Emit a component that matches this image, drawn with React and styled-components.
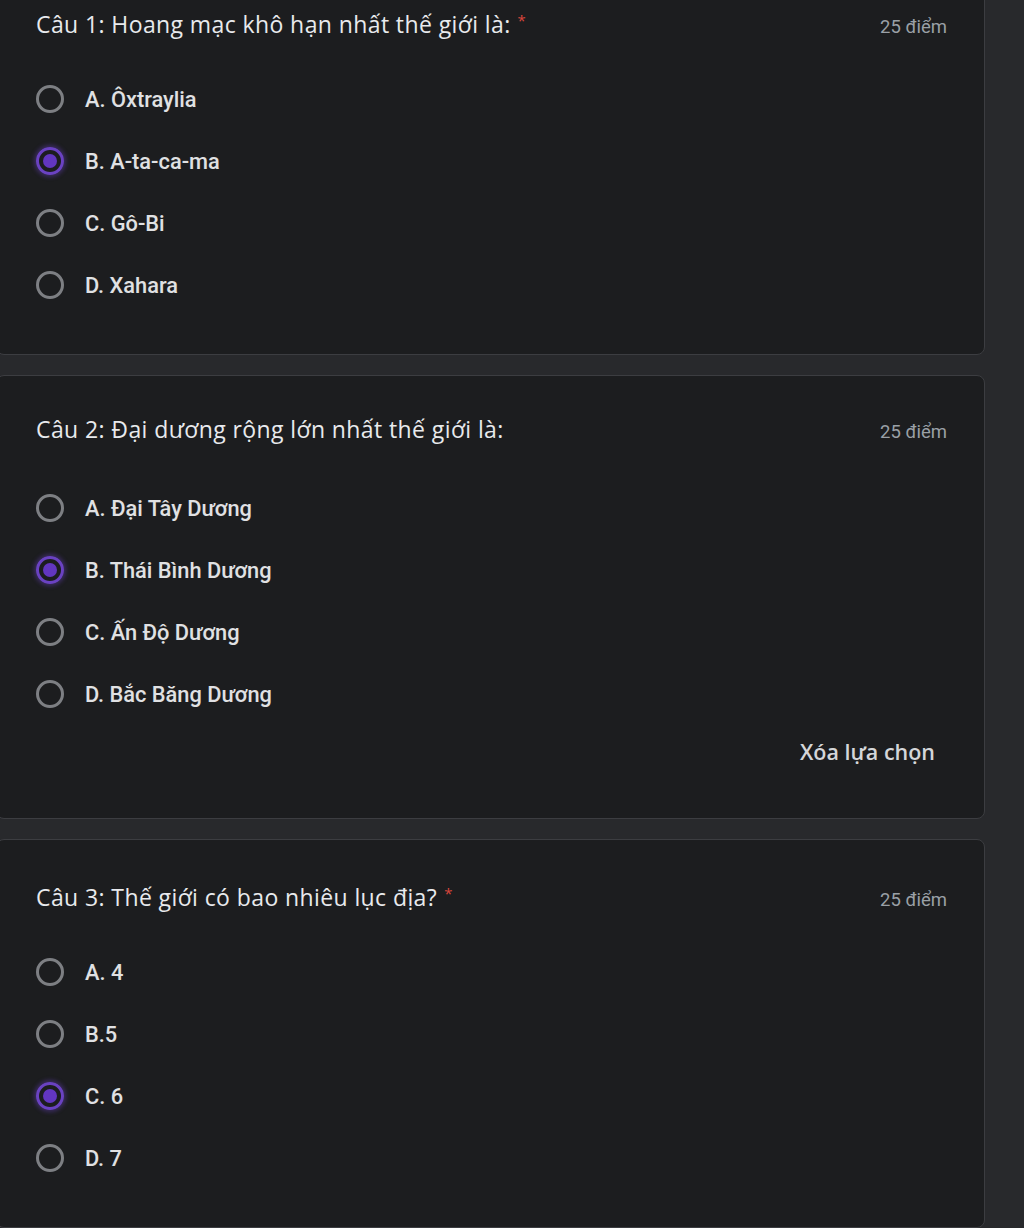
import React from 'react';
import styled, { createGlobalStyle } from 'styled-components';

const GlobalStyle = createGlobalStyle`
  html, body {
    margin: 0;
    padding: 0;
    background: #28292c;
  }
`

const Page = styled.div`
  min-height: 1228px;
  overflow: hidden;
  background: #28292c;
`

const Column = styled.div`
  width: 989px;
  margin: -34px 0 0 -4px;
  display: flex;
  flex-direction: column;
  gap: 20px;
`

const Card = styled.div`
  background: #1c1d1f;
  border: 1px solid #3c3d41;
  border-radius: 8px;
  padding: 37px 37px 38px 39px;
`

const TitleRow = styled.div`
  display: flex;
  justify-content: space-between;
  align-items: baseline;
  height: 32px;
`

const Title = styled.div`
  font-family: "Open Sans", "Noto Sans", sans-serif;
  font-size: 23px;
  font-weight: 500;
  line-height: 32px;
  color: #e8eaed;
  letter-spacing: 0.4px;
`

const Required = styled.span`
  color: #d9463c;
  margin-left: 7px;
  font-size: 15px;
  vertical-align: 7px;
`

const Points = styled.div`
  font-family: Roboto, "Noto Sans", sans-serif;
  font-size: 18.5px;
  color: #9aa0a6;
  margin-top: 2px;
`

const OptionList = styled.div`
  display: flex;
  flex-direction: column;
  margin-top: 32px;
`

const OptionRow = styled.label`
  display: flex;
  align-items: center;
  height: 62px;
  gap: 21px;
`

const Radio = styled.span`
  position: relative;
  width: 28px;
  height: 28px;
  box-sizing: border-box;
  border-radius: 50%;
  border: 3px solid ${p => (p.checked ? '#6a42c2' : '#7d7f83')};
  box-shadow: ${p => (p.checked ? '0 0 4px 2px rgba(106, 66, 194, 0.4)' : 'none')};
  flex-shrink: 0;

  &::after {
    content: '';
    display: ${p => (p.checked ? 'block' : 'none')};
    position: absolute;
    left: 50%;
    top: 50%;
    width: 14px;
    height: 14px;
    border-radius: 50%;
    background: #6236c0;
    transform: translate(-50%, -50%);
  }
`

const OptionText = styled.span`
  font-family: Roboto, "Noto Sans", sans-serif;
  font-size: 21.8px;
  font-weight: 500;
  color: #e0e1e3;
`

const Footer = styled.div`
  display: flex;
  justify-content: flex-end;
  margin: 8px 0 11px;
`

const ClearButton = styled.button`
  background: none;
  border: none;
  height: 36px;
  padding: 0 12px;
  font-family: "Open Sans", "Noto Sans", sans-serif;
  font-size: 21.5px;
  font-weight: 600;
  color: #d4d6d9;
  cursor: pointer;
`

const questions = [
  {
    title: 'Câu 1: Hoang mạc khô hạn nhất thế giới là:',
    required: true,
    options: ['A. Ôxtraylia', 'B. A-ta-ca-ma', 'C. Gô-Bi', 'D. Xahara'],
    checked: 1,
  },
  {
    title: 'Câu 2: Đại dương rộng lớn nhất thế giới là:',
    required: false,
    options: ['A. Đại Tây Dương', 'B. Thái Bình Dương', 'C. Ấn Độ Dương', 'D. Bắc Băng Dương'],
    checked: 1,
    clear: true,
  },
  {
    title: 'Câu 3: Thế giới có bao nhiêu lục địa?',
    required: true,
    options: ['A. 4', 'B.5', 'C. 6', 'D. 7'],
    checked: 2,
  },
]

function Question({ q }) {
  return (
    <Card>
      <TitleRow>
        <Title>
          {q.title}
          {q.required && <Required>*</Required>}
        </Title>
        <Points>25 điểm</Points>
      </TitleRow>
      <OptionList>
        {q.options.map((o, i) => (
          <OptionRow key={o}>
            <Radio checked={i === q.checked} />
            <OptionText>{o}</OptionText>
          </OptionRow>
        ))}
      </OptionList>
      {q.clear && (
        <Footer>
          <ClearButton>Xóa lựa chọn</ClearButton>
        </Footer>
      )}
    </Card>
  )
}

export default function App() {
  return (
    <Page>
      <GlobalStyle />
      <Column>
        {questions.map(q => (
          <Question key={q.title} q={q} />
        ))}
      </Column>
    </Page>
  )
}
